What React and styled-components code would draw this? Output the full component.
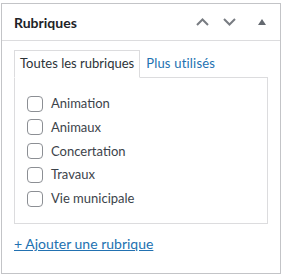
import React from 'react';
import styled, { createGlobalStyle } from 'styled-components';

const GlobalStyle = createGlobalStyle`
  body {
    margin: 0;
    background: #fff;
    font-family: Lato, "Noto Sans", sans-serif;
    font-size: 13px;
    color: #3c434a;
  }
`;

const Page = styled.div`
  padding: 3px 0 0 1px;
`;

const Card = styled.div`
  width: 280px;
  height: 271px;
  box-sizing: border-box;
  border: 1px solid #c3c4c7;
  background: #fff;
`;

const Header = styled.div`
  display: flex;
  align-items: center;
  height: 36px;
  padding: 0 0 0 12px;
  border-bottom: 1px solid #dcdcde;
`;

const Title = styled.h2`
  flex: 1;
  margin: 0;
  font-size: 14px;
  font-weight: 700;
  color: #1d2327;
`;

const IconButton = styled.button`
  display: flex;
  align-items: center;
  justify-content: center;
  width: ${(p) => p.$width || 27}px;
  height: 36px;
  padding: 0;
  border: 0;
  background: none;
  color: ${(p) => p.$color || '#787c82'};
`;

const Body = styled.div`
  padding: 9px 12px 12px;
`;

const Tabs = styled.ul`
  display: flex;
  margin: 0;
  padding: 0;
  list-style: none;
`;

const Tab = styled.li`
  padding: 3px ${(p) => (p.$active ? 5 : 7)}px 5px 5px;
  margin-bottom: -1px;
  border: 1px solid ${(p) => (p.$active ? '#dcdcde' : 'transparent')};
  border-bottom-color: ${(p) => (p.$active ? '#fff' : 'transparent')};
  background: ${(p) => (p.$active ? '#fff' : 'transparent')};
  color: ${(p) => (p.$active ? '#2c3338' : '#2271b1')};
  line-height: 18px;
  letter-spacing: ${(p) => (p.$active ? 0 : 0.2)}px;
  position: relative;
`;

const Panel = styled.div`
  height: 147px;
  box-sizing: border-box;
  border: 1px solid #dcdcde;
  background: #fff;
  padding: 17px 12px;
`;

const List = styled.ul`
  margin: 0;
  padding: 0;
  list-style: none;
  display: flex;
  flex-direction: column;
  gap: 6.75px;
`;

const Row = styled.li`
  display: flex;
  align-items: center;
  gap: 8px;
  line-height: 17px;
`;

const Box = styled.span`
  width: 16px;
  height: 16px;
  box-sizing: border-box;
  border: 1px solid #8c8f94;
  border-radius: 4px;
  background: #fff;
`;

const AddLink = styled.a`
  display: inline-block;
  margin-top: 11px;
  color: #2271b1;
  text-decoration: underline;
  font-size: 14px;
`;

const Chevron = ({ up }) => (
  <svg width="13" height="8" viewBox="0 0 13 8">
    <path
      d={up ? 'M1 7 L6.5 1.5 L12 7' : 'M1 1 L6.5 6.5 L12 1'}
      fill="none"
      stroke="currentColor"
      strokeWidth="2"
    />
  </svg>
);

const Triangle = () => (
  <svg width="8" height="6" viewBox="0 0 8 6">
    <path d="M4 0 L8 6 L0 6 Z" fill="currentColor" />
  </svg>
);

const terms = ['Animation', 'Animaux', 'Concertation', 'Travaux', 'Vie municipale'];

export default function App() {
  return (
    <Page>
      <GlobalStyle />
      <Card>
        <Header>
          <Title>Rubriques</Title>
          <IconButton>
            <Chevron up />
          </IconButton>
          <IconButton>
            <Chevron />
          </IconButton>
          <IconButton $color="#646970" $width={37}>
            <Triangle />
          </IconButton>
        </Header>
        <Body>
          <Tabs>
            <Tab $active>Toutes les rubriques</Tab>
            <Tab>Plus utilisés</Tab>
          </Tabs>
          <Panel>
            <List>
              {terms.map((t) => (
                <Row key={t}>
                  <Box />
                  {t}
                </Row>
              ))}
            </List>
          </Panel>
          <AddLink href="#">+ Ajouter une rubrique</AddLink>
        </Body>
      </Card>
    </Page>
  );
}
